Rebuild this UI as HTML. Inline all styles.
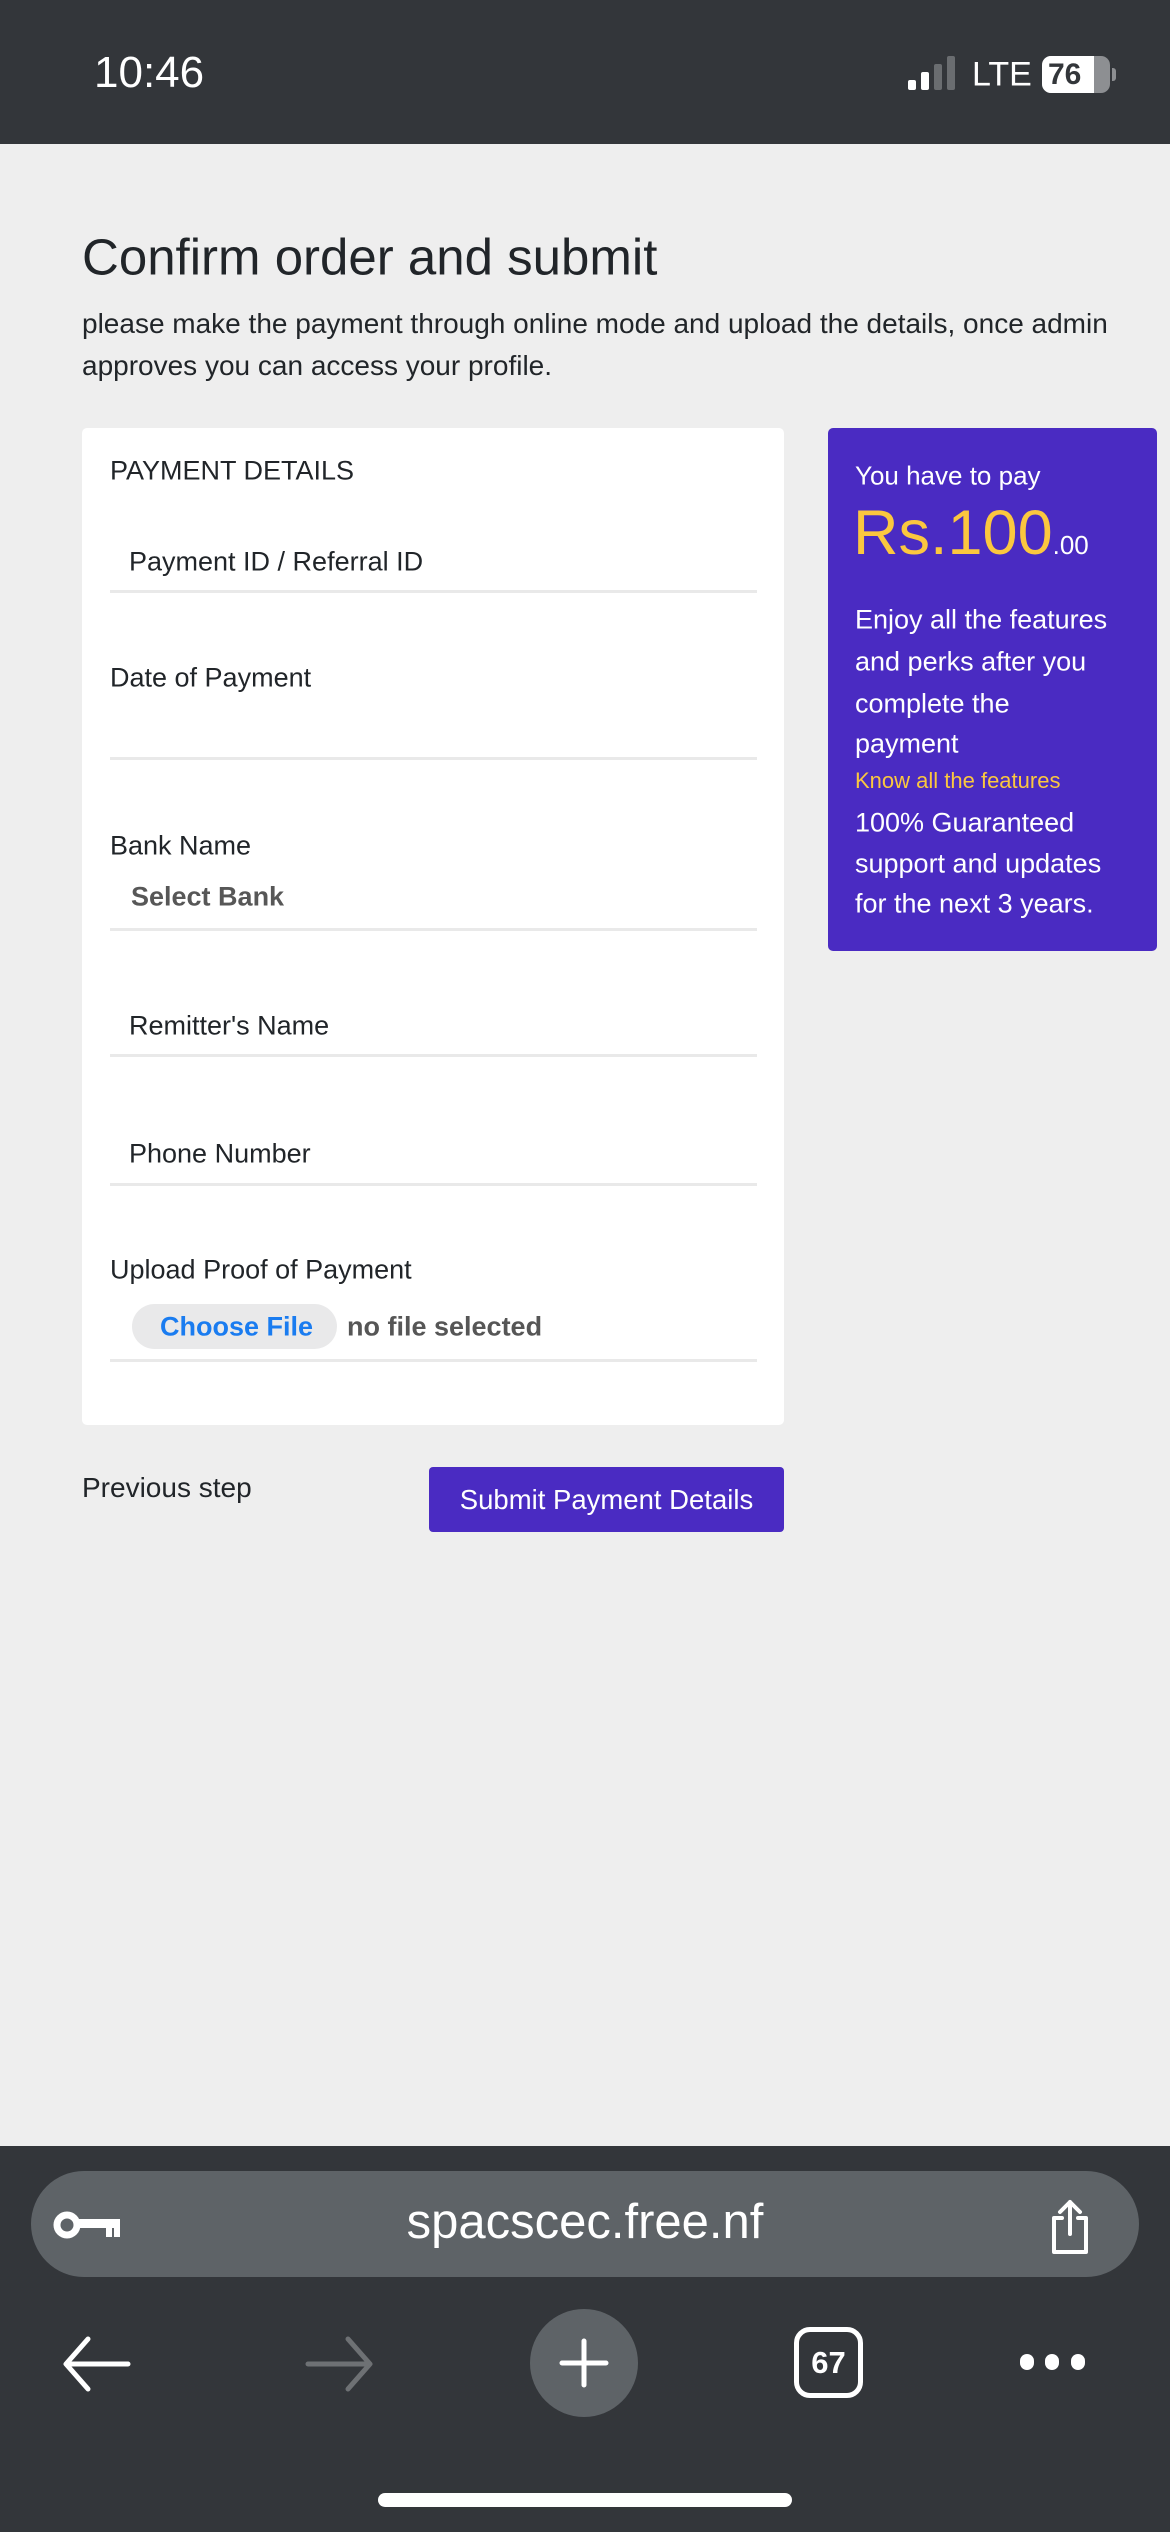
<!DOCTYPE html>
<html><head><meta charset="utf-8"><style>
*{margin:0;padding:0;box-sizing:border-box}
body{width:1170px;height:2532px;background:#eeeeee;font-family:"Liberation Sans",sans-serif;position:relative;overflow:hidden;color:#212529}
.a{position:absolute;white-space:nowrap}
.c{transform:translateY(-50%)}
.line{position:absolute;left:110px;width:647px;height:3px;background:#e9e9e9}
.lbl{font-size:27px;color:#212529}
</style></head><body>
<div class="a" style="left:0;top:0;width:1170px;height:144px;background:#33363a"></div>
<div class="a c" style="left:94px;top:73px;font-size:44px;color:#fff;font-weight:500">10:46</div>
<div class="a" style="left:908px;top:80px;width:8px;height:10px;background:#fff;border-radius:2px"></div>
<div class="a" style="left:921px;top:72px;width:8px;height:18px;background:#fff;border-radius:2px"></div>
<div class="a" style="left:934px;top:64px;width:8px;height:26px;background:#6a6d70;border-radius:2px"></div>
<div class="a" style="left:947px;top:56px;width:8px;height:34px;background:#6a6d70;border-radius:2px"></div>
<div class="a c" style="left:972px;top:75px;font-size:34px;color:#fff">LTE</div>
<div class="a" style="left:1042px;top:56px;width:68px;height:37px;background:#8d8f92;border-radius:9px;overflow:hidden"><div style="width:52px;height:37px;background:#fff"></div></div>
<div class="a c" style="left:1048px;top:75px;font-size:30px;font-weight:bold;color:#33363a">76</div>
<div class="a" style="left:1112px;top:68px;width:4px;height:13px;background:#8d8f92;border-radius:0 3px 3px 0"></div>

<div class="a c" style="left:82px;top:257px;font-size:51px;color:#212529">Confirm order and submit</div>
<div class="a c" style="left:82px;top:324px;font-size:28px">please make the payment through online mode and upload the details, once admin</div>
<div class="a c" style="left:82px;top:366px;font-size:28px">approves you can access your profile.</div>

<div class="a" style="left:82px;top:428px;width:702px;height:997px;background:#fff;border-radius:5px"></div>
<div class="a c lbl" style="left:110px;top:471px">PAYMENT DETAILS</div>
<div class="a c lbl" style="left:129px;top:562px">Payment ID / Referral ID</div>
<div class="line" style="top:590px"></div>
<div class="a c lbl" style="left:110px;top:678px">Date of Payment</div>
<div class="line" style="top:757px"></div>
<div class="a c lbl" style="left:110px;top:846px">Bank Name</div>
<div class="a c" style="left:131px;top:897px;font-size:27px;color:#3a3a3a;font-weight:bold;opacity:.85">Select Bank</div>
<div class="line" style="top:928px"></div>
<div class="a c lbl" style="left:129px;top:1026px">Remitter's Name</div>
<div class="line" style="top:1054px"></div>
<div class="a c lbl" style="left:129px;top:1154px">Phone Number</div>
<div class="line" style="top:1183px"></div>
<div class="a c lbl" style="left:110px;top:1270px">Upload Proof of Payment</div>
<div class="a" style="left:132px;top:1304px;width:205px;height:45px;background:#e9e9ea;border-radius:23px"></div>
<div class="a c" style="left:160px;top:1327px;font-size:27px;color:#1a7cf0;font-weight:bold">Choose File</div>
<div class="a c" style="left:347px;top:1327px;font-size:27px;color:#444;font-weight:bold;opacity:.9">no file selected</div>
<div class="line" style="top:1359px"></div>

<div class="a c" style="left:82px;top:1488px;font-size:28px">Previous step</div>
<div class="a" style="left:429px;top:1467px;width:355px;height:65px;background:#4a2bc2;border-radius:4px"></div>
<div class="a c" style="left:429px;width:355px;text-align:center;top:1500px;font-size:27.5px;color:#fff">Submit Payment Details</div>

<div class="a" style="left:828px;top:428px;width:329px;height:523px;background:#4a2bc2;border-radius:5px"></div>
<div class="a c" style="left:855px;top:476px;font-size:26px;color:#fff">You have to pay</div>
<div class="a c" style="left:853px;top:533px;font-size:63px;color:#fbc73f">Rs.100<span style="font-size:26px;color:#fff">.00</span></div>
<div class="a c" style="left:855px;top:620px;font-size:27px;color:#fff">Enjoy all the features</div>
<div class="a c" style="left:855px;top:662px;font-size:27px;color:#fff">and perks after you</div>
<div class="a c" style="left:855px;top:704px;font-size:27px;color:#fff">complete the</div>
<div class="a c" style="left:855px;top:744px;font-size:27px;color:#fff">payment</div>
<div class="a c" style="left:855px;top:781px;font-size:22px;color:#fbc73f">Know all the features</div>
<div class="a c" style="left:855px;top:823px;font-size:27px;color:#fff">100% Guaranteed</div>
<div class="a c" style="left:855px;top:864px;font-size:27px;color:#fff">support and updates</div>
<div class="a c" style="left:855px;top:904px;font-size:27px;color:#fff">for the next 3 years.</div>

<div class="a" style="left:0;top:2146px;width:1170px;height:386px;background:#33363a"></div>
<div class="a" style="left:31px;top:2171px;width:1108px;height:106px;background:#5e6367;border-radius:53px"></div>
<div class="a c" style="left:0;width:1170px;text-align:center;top:2222px;font-size:49px;color:#fff">spacscec.free.nf</div>
<svg class="a" style="left:52px;top:2207px" width="75" height="36" viewBox="0 0 75 36"><circle cx="15" cy="18" r="10" fill="none" stroke="#fff" stroke-width="7"/><rect x="25" y="12" width="43" height="9" fill="#fff"/><rect x="54" y="20" width="6" height="10" fill="#fff"/><rect x="62" y="20" width="6" height="10" fill="#fff"/></svg>
<svg class="a" style="left:1040px;top:2198px" width="60" height="60" viewBox="0 0 60 60" fill="none" stroke="#fff" stroke-width="4" stroke-linecap="round" stroke-linejoin="round"><path d="M22 20h-8v34h32V20h-8"/><path d="M30 36V4M20 14l10-10 10 10"/></svg>
<svg class="a" style="left:58px;top:2335px" width="80" height="60" viewBox="0 0 80 60" fill="none" stroke="#fff" stroke-width="5" stroke-linecap="round" stroke-linejoin="round"><path d="M70 29H8M30 4L8 29l22 25"/></svg>
<svg class="a" style="left:300px;top:2335px" width="80" height="60" viewBox="0 0 80 60" fill="none" stroke="#6e7174" stroke-width="5" stroke-linecap="round" stroke-linejoin="round"><path d="M8 29h62M48 4l22 25-22 25"/></svg>
<div class="a" style="left:530px;top:2309px;width:108px;height:108px;border-radius:54px;background:#5e6367"></div>
<svg class="a" style="left:558px;top:2337px" width="52" height="52" viewBox="0 0 52 52" stroke="#fff" stroke-width="5" stroke-linecap="round"><path d="M26 4v44M4 26h44"/></svg>
<div class="a" style="left:794px;top:2327px;width:69px;height:71px;border:5px solid #fff;border-radius:16px"></div>
<div class="a c" style="left:794px;width:69px;text-align:center;top:2363px;font-size:31px;color:#fff;font-weight:bold">67</div>
<div class="a" style="left:1020px;top:2354px;width:14px;height:16px;border-radius:8px;background:#fff"></div>
<div class="a" style="left:1045px;top:2354px;width:14px;height:16px;border-radius:8px;background:#fff"></div>
<div class="a" style="left:1071px;top:2354px;width:14px;height:16px;border-radius:8px;background:#fff"></div>
<div class="a" style="left:378px;top:2493px;width:414px;height:14px;border-radius:7px;background:#fff"></div>
</body></html>
